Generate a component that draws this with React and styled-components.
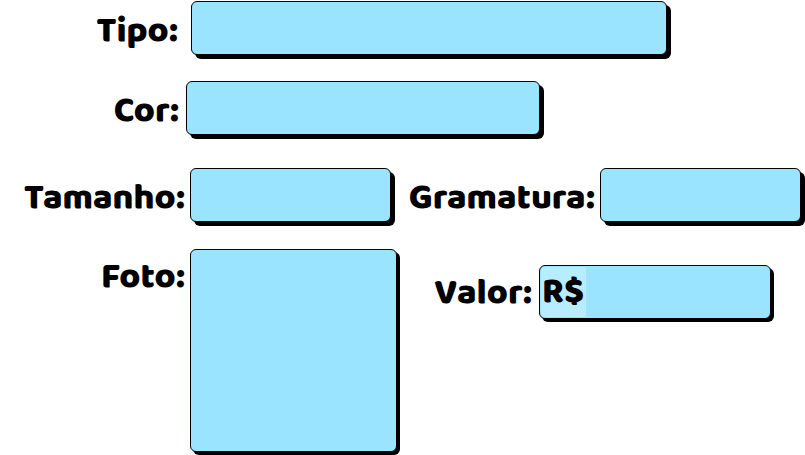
import React from "react";
import styled, { createGlobalStyle, css } from "styled-components";

const GlobalStyle = createGlobalStyle`
  *, *::before, *::after { box-sizing: border-box; }
  body { margin: 0; background: #fff; color: #000; }
`;

const textStyle = css`
  font-family: "Baloo 2", "Noto Sans", sans-serif;
  font-size: 36px;
  font-weight: 800;
  color: #000;
`;

const boxStyle = css`
  width: 100%;
  min-width: 0;
  margin: 0;
  border: 1px solid #000;
  border-radius: 6px;
  background: #9ae4ff;
  outline: none;
`;

const Form = styled.form`
  display: flex;
  flex-direction: column;
  padding: 1px 0 3px;
`;

const Row = styled.div`
  display: grid;
  grid-template-columns: ${({ $columns }) => $columns};
  align-items: start;
  margin-bottom: ${({ $after = 0 }) => $after}px;
`;

const Label = styled.label`
  ${textStyle}
  line-height: ${({ $line = 60 }) => $line}px;
  height: 54px;
  padding-right: ${({ $gap = 5 }) => $gap}px;
  text-align: right;
  white-space: nowrap;
`;

const TextField = styled.input`
  ${textStyle}
  ${boxStyle}
  height: 54px;
  padding: 0 8px;
  box-shadow: 4px 4px 0 #000;
`;

const PhotoField = styled.input`
  ${boxStyle}
  height: 203px;
  box-shadow: 3px 3px 0 #000;
  color: transparent;
  cursor: pointer;
  &::file-selector-button { display: none; }
`;

const PriceGroup = styled.div`
  display: grid;
  grid-template-columns: subgrid;
  grid-column: span 2;
  margin-top: 16px;
`;

const PriceBox = styled.div`
  ${boxStyle}
  display: flex;
  height: 54px;
  padding: 1px;
  box-shadow: 3px 3px 0 #000;
`;

const Currency = styled.span`
  ${textStyle}
  flex: none;
  padding: 0 2px 0 1px;
  line-height: 50px;
  background: #b8edff;
  border-radius: 4px 2px 2px 4px;
`;

const PriceInput = styled.input`
  ${textStyle}
  flex: 1;
  min-width: 0;
  border: 0;
  padding: 0 4px;
  background: transparent;
  outline: none;
`;

export default function App() {
  return (
    <>
      <GlobalStyle />
      <Form>
        <Row $columns="191px 476fr 138fr" $after={26}>
          <Label htmlFor="tipo" $gap={13}>Tipo:</Label>
          <TextField id="tipo" type="text" />
        </Row>
        <Row $columns="186px 354fr 265fr" $after={33}>
          <Label htmlFor="cor" $gap={7}>Cor:</Label>
          <TextField id="cor" type="text" />
        </Row>
        <Row $columns="190px 1fr 209px 1fr 4px" $after={27}>
          <Label htmlFor="tamanho">Tamanho:</Label>
          <TextField id="tamanho" type="text" />
          <Label htmlFor="gramatura">Gramatura:</Label>
          <TextField id="gramatura" type="text" />
        </Row>
        <Row $columns="190px 207fr 142px 232fr 34px">
          <Label htmlFor="foto" $line={56}>Foto:</Label>
          <PhotoField id="foto" type="file" accept="image/*" />
          <PriceGroup>
            <Label htmlFor="valor" $gap={7} $line={56}>Valor:</Label>
            <PriceBox>
              <Currency>R$</Currency>
              <PriceInput id="valor" type="text" inputMode="decimal" />
            </PriceBox>
          </PriceGroup>
        </Row>
      </Form>
    </>
  );
}
